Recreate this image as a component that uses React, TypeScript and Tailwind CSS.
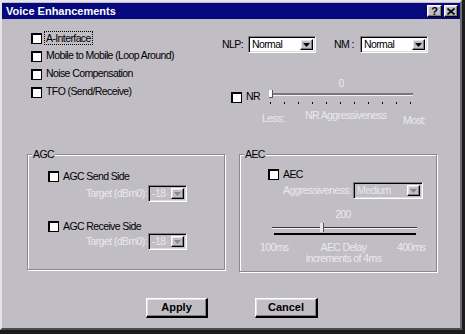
import React from "react";

const sunken =
  "border border-t-[#808080] border-l-[#808080] border-r-white border-b-white shadow-[inset_1px_1px_0_#000,inset_-1px_-1px_0_#dcdcdc]";
const raised =
  "border border-t-white border-l-white border-r-black border-b-black shadow-[inset_-1px_-1px_0_#808080,inset_1px_1px_0_#e4e2e6]";

function Check() {
  return (
    <span className="block w-[11px] h-[11px] shrink-0 bg-white border border-black border-t-2 border-l-2" />
  );
}

function Arrow({ disabled }: { disabled?: boolean }) {
  return (
    <div className={`w-[13px] h-full flex items-center justify-center bg-[#c0bdc4] ${raised}`}>
      <svg width="7" height="4" viewBox="0 0 7 4">
        <polygon points="0,0 7,0 3.5,4" fill={disabled ? "#8a878e" : "#000"} />
      </svg>
    </div>
  );
}

function Select({ value, width, height, disabled }: { value: string; width: string; height: string; disabled?: boolean }) {
  return (
    <div className={`flex shrink-0 ${width} ${height} p-[2px] ${sunken} ${disabled ? "bg-[#c0bdc4]" : "bg-white"}`}>
      <span className={`flex-1 flex items-center pl-[1px] leading-none ${disabled ? "text-[#e9e7ec]" : "text-black"}`}>
        {value}
      </span>
      <Arrow disabled={disabled} />
    </div>
  );
}

function Group({ label, className, children }: { label: string; className: string; children: React.ReactNode }) {
  return (
    <div className={`relative border border-[#8a878e] shadow-[1px_1px_0_#fff,inset_1px_1px_0_#fff] ${className}`}>
      <span className="absolute -top-[7px] left-[4px] px-[1px] bg-[#c0bdc4] leading-[13px]">{label}</span>
      {children}
    </div>
  );
}

const dim = "text-[#ebe9ee]";
const boldFont = "font-['Liberation_Sans',Arial,sans-serif] font-bold text-[11px] tracking-normal";

export default function App() {
  const ticks = Array.from({ length: 11 }, (_, i) => 4 + i * 14);
  return (
    <div className="w-[465px] h-[334px] bg-[#1c1c1c] font-['Liberation_Sans',Arial,sans-serif] text-[10.5px] tracking-[-0.6px] whitespace-nowrap text-black">
      <div className="w-[462px] h-[330px] bg-[#c0bdc4] border-t-2 border-l-2 border-t-[#e6e4e8] border-l-[#e6e4e8] border-r-2 border-b-2 border-r-[#6e6b72] border-b-[#4a484c] flex flex-col">
        {/* caption */}
        <div className="mt-[1px] h-[16px] bg-[#07077e] flex items-center pl-[4px] pr-[2px]">
          <span className={`flex-1 text-white leading-none ${boldFont} tracking-[-0.4px]`}>Voice Enhancements</span>
          <div className="flex gap-[2px]">
            <div className={`w-[15px] h-[12px] flex items-center justify-center bg-[#c0bdc4] ${raised}`}>
              <span className={`${boldFont} text-[10px] leading-none`}>?</span>
            </div>
            <div className={`w-[14px] h-[12px] flex items-center justify-center bg-[#c0bdc4] ${raised}`}>
              <svg width="8" height="7" viewBox="0 0 8 7">
                <path d="M0.5 0.5 L7.5 6.5 M7.5 0.5 L0.5 6.5" stroke="#000" strokeWidth="1.6" />
              </svg>
            </div>
          </div>
        </div>

        {/* top section */}
        <div className="h-[135px] flex">
          <div className="w-[220px] pl-[29px] pt-[10px] flex flex-col">
            <div className="h-[18px] flex items-center gap-[3px]">
              <Check />
              <span className="outline-1 outline-dotted outline-black px-[1px] leading-[12px]">A-Interface</span>
            </div>
            <div className="h-[18px] flex items-center gap-[4px]">
              <Check />
              <span>Mobile to Mobile (Loop Around)</span>
            </div>
            <div className="h-[18px] flex items-center gap-[4px]">
              <Check />
              <span>Noise Compensation</span>
            </div>
            <div className="h-[18px] flex items-center gap-[4px]">
              <Check />
              <span>TFO (Send/Receive)</span>
            </div>
          </div>

          <div className="flex-1 flex flex-col">
            <div className="mt-[17px] flex items-center">
              <span className="w-[26px]">NLP:</span>
              <Select value="Normal" width="w-[68px]" height="h-[17px]" />
              <span className="ml-[18px] w-[26px]">NM :</span>
              <Select value="Normal" width="w-[68px]" height="h-[17px]" />
            </div>
            <div className="mt-[25px] ml-[9px] flex items-end">
              <div className="h-[16px] flex items-center gap-[4px] w-[35px]">
                <Check />
                <span>NR</span>
              </div>
              <div className="flex flex-col items-center">
                <span className={`leading-[11px] ${dim}`}>0</span>
                <svg width="150" height="16" viewBox="0 0 150 16">
                  <rect x="4" y="4" width="143" height="2" fill="#7a777e" />
                  <rect x="4" y="6" width="143" height="1" fill="#f2f0f4" />
                  <rect x="3" y="1" width="4" height="8" fill="#ffffff" />
                  <rect x="6" y="1" width="1" height="8" fill="#555" />
                  <rect x="3" y="8" width="4" height="1" fill="#555" />
                  {ticks.map((t) => (
                    <rect key={t} x={t} y="13" width="1" height="2" fill="#000" />
                  ))}
                </svg>
              </div>
            </div>
            <div className={`ml-[40px] mt-[3px] flex items-start ${dim}`}>
              <span className="w-[43px] mt-[3px]">Less:</span>
              <span className="w-[98px]">NR Aggressiveness</span>
              <span className="mt-[5px]">Most:</span>
            </div>
          </div>
        </div>

        {/* groups */}
        <div className="flex items-start pl-[25px]">
          <Group label="AGC" className="w-[198px] h-[116px]">
            <div className="pl-[20px] pt-[15px] flex flex-col">
              <div className="h-[13px] flex items-center gap-[4px]">
                <Check />
                <span>AGC Send Side</span>
              </div>
              <div className="ml-[36px] mt-[2px] flex items-center gap-[1px]">
                <span className={`w-[63px] text-right ${dim}`}>Target (dBm0):</span>
                <Select value="-18" width="w-[39px]" height="h-[17px]" disabled />
              </div>
              <div className="mt-[18px] h-[13px] flex items-center gap-[4px]">
                <Check />
                <span>AGC Receive Side</span>
              </div>
              <div className="ml-[36px] flex items-center gap-[1px]">
                <span className={`w-[63px] text-right ${dim}`}>Target (dBm0):</span>
                <Select value="-18" width="w-[39px]" height="h-[17px]" disabled />
              </div>
            </div>
          </Group>

          <Group label="AEC" className="ml-[14px] w-[198px] h-[118px]">
            <div className="pl-[28px] pt-[13px] flex flex-col">
              <div className="h-[13px] flex items-center gap-[4px]">
                <Check />
                <span>AEC</span>
              </div>
              <div className="ml-[15px] mt-[1px] flex items-center gap-[3px]">
                <span className={`w-[67px] ${dim}`}>Aggressiveness:</span>
                <Select value="Medium" width="w-[70px]" height="h-[17px]" disabled />
              </div>
            </div>
            <div className="ml-[26px] w-[154px] mt-[10px] flex flex-col items-center">
              <span className={`leading-[11px] ${dim}`}>200</span>
              <svg width="154" height="16" viewBox="0 0 154 16">
                <rect x="6" y="7" width="145" height="1" fill="#3a383c" />
                <rect x="6" y="8" width="145" height="1" fill="#f2f0f4" />
                <rect x="54" y="3" width="4" height="9" fill="#e8e6ea" />
                <rect x="57" y="3" width="1" height="9" fill="#555" />
                <rect x="8" y="13" width="142" height="2" fill="#000" />
              </svg>
            </div>
            <div className={`ml-[20px] mt-[6px] flex ${dim} leading-[11px]`}>
              <span className="w-[30px]">100ms</span>
              <div className="w-[107px] flex flex-col items-center">
                <span>AEC Delay</span>
                <span>increments of 4ms</span>
              </div>
              <span>400ms</span>
            </div>
          </Group>
        </div>

        {/* buttons */}
        <div className="mt-[26px] pl-[144px] flex gap-[47px]">
          <button className={`w-[62px] h-[20px] bg-[#c0bdc4] ${boldFont} ${raised} border-r-2 border-b-2`}>
            Apply
          </button>
          <button className={`w-[63px] h-[20px] bg-[#c0bdc4] ${boldFont} ${raised} border-r-2 border-b-2`}>
            Cancel
          </button>
        </div>
      </div>
    </div>
  );
}
